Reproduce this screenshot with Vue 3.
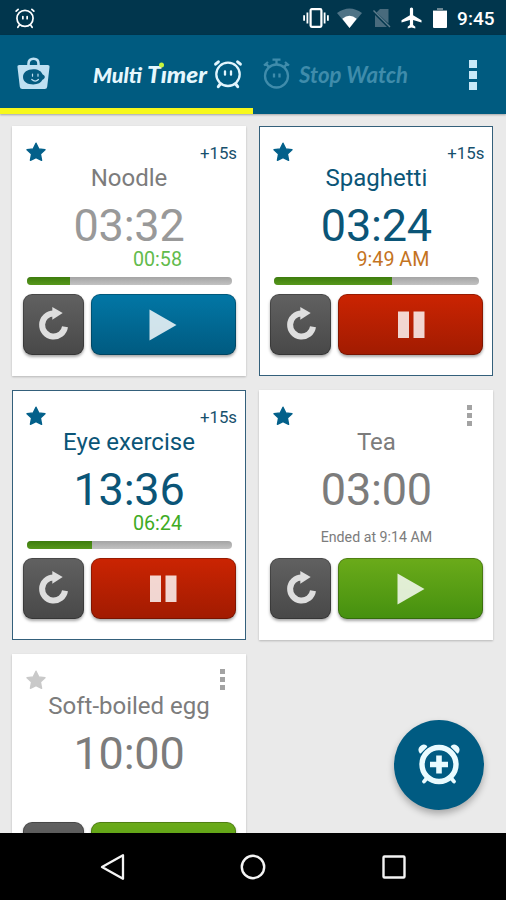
<script setup>
const timers = [
  { name: 'Noodle', time: '03:32', tone: 'paused', extra: '+15s', sub: '00:58', subTone: 'green', progress: 21, action: 'play', color: 'blue', star: true },
  { name: 'Spaghetti', time: '03:24', tone: 'running', extra: '+15s', sub: '9:49 AM', subTone: 'orange', progress: 57.5, action: 'pause', color: 'red', star: true },
  { name: 'Eye exercise', time: '13:36', tone: 'running', extra: '+15s', sub: '06:24', subTone: 'vivid', progress: 32, action: 'pause', color: 'red', star: true },
  { name: 'Tea', time: '03:00', tone: 'idle', note: 'Ended at 9:14 AM', action: 'play', color: 'green', star: true },
  { name: 'Soft-boiled egg', time: '10:00', tone: 'idle', action: 'play', color: 'green', star: false }
]
</script>

<template>
  <div class="screen">
    <div class="status">
      <svg class="s-clock" width="20" height="20" viewBox="0 0 28 28" fill="none" stroke="#fff" stroke-width="2.4" stroke-linecap="round">
        <circle cx="14" cy="14.5" r="11.3" />
        <path d="M11 12v3M17 12v3" />
        <path d="M1.6 4.4 4.4 1.8M26.4 4.4 23.6 1.8M6 24l-2 3M22 24l2 3" />
      </svg>
      <div class="s-right">
        <svg width="26" height="20" viewBox="0 0 26 20">
          <rect x="7.6" y="1.2" width="10.8" height="17.6" rx="1.2" fill="none" stroke="#fff" stroke-width="2.2" />
          <path d="M4.4 4.5v11M1.1 7.2v5.6M21.6 4.5v11M24.9 7.2v5.6" stroke="#fff" stroke-width="1.8" />
        </svg>
        <svg class="wifi" width="25" height="20" viewBox="0 0 25 20">
          <path d="M0 5Q12.5-4 25 5L12.5 20z" fill="#4f7386" />
          <path d="M5.3 10.7Q12.5 5 19.7 10.7L12.5 20z" fill="#fff" />
        </svg>
        <svg width="18" height="20" viewBox="0 0 18 20">
          <path d="M7 1H15.500v14.500L3.500 4.500zM2 7 14 19H2z" fill="#496b7d" />
          <path d="M.5 2.500 17 19" stroke="#5e7c8c" stroke-width="1.500" />
        </svg>
        <svg width="21" height="22" viewBox="0 0 21 22">
          <path d="M10.500.5c1 0 1.600.8 1.600 1.800v5.900l8.400 5.100v2.200l-8.400-2.600v5.200l2.200 1.700v1.700l-3.800-1.100-3.800 1.100v-1.700l2.200-1.700v-5.200L.5 15.500v-2.200l8.400-5.100V2.300C8.900 1.300 9.500.5 10.500.5z" fill="#fff" />
        </svg>
        <svg width="14" height="20" viewBox="0 0 14 20">
          <path d="M4 0h6v2h4v2H0V2h4z" fill="#6c8793" />
          <path d="M0 3h14V19a1 1 0 0 1-1 1H1a1 1 0 0 1-1-1z" fill="#fff" />
        </svg>
        <span class="clock">9:45</span>
      </div>
    </div>

    <header class="bar">
      <div class="tabs">
        <svg class="bag" width="33" height="33" viewBox="0 0 33 33">
          <path d="M11.500 9V6.800C11.500 3.500 13.500 1.800 16.500 1.800S21.500 3.500 21.500 6.800V9" fill="none" stroke="#bfe0f2" stroke-width="2.600" />
          <path d="M2.500 8h28a2 2 0 0 1 2 2.300l-2.300 19.500a2.500 2.500 0 0 1-2.500 2.200H5.300a2.500 2.500 0 0 1-2.500-2.200L.5 10.300A2 2 0 0 1 2.500 8z" fill="#bfe0f2" />
          <path d="M6 20c0-5 4.500-7.800 10.300-7.800 5 0 8 2 9.200 5 1.500.8 2.300 1.800 2.300 2.800s-.8 2-2.300 2.800c-1.500 3-4.500 4.600-9.200 4.600C10.500 27.400 6 25 6 20z" fill="#045b80" />
          <path d="M15.500 17v2.200M21 17v2.200M14.800 22.500q3.500 3.200 6.600 0" fill="none" stroke="#bfe0f2" stroke-width="1.200" stroke-linecap="round" />
        </svg>
        <svg class="logo" width="116" height="32" viewBox="0 0 116 32">
          <defs>
            <linearGradient id="stem" gradientUnits="userSpaceOnUse" x1="0" y1="0" x2="0" y2="32">
              <stop offset=".36" stop-color="#e6f7fd" stop-opacity="0" />
              <stop offset=".36" stop-color="#e6f7fd" />
            </linearGradient>
          </defs>
          <text x="0" y="24" class="brand small" textLength="49" lengthAdjust="spacingAndGlyphs">Multi</text>
          <text x="54" y="24" class="brand" textLength="60" lengthAdjust="spacingAndGlyphs">T<tspan fill="url(#stem)">i</tspan>mer</text>
          <circle cx="68.500" cy="6" r="2.500" fill="#c6f63c" />
        </svg>
        <svg class="alarm" width="28" height="28" viewBox="0 0 28 28" fill="none" stroke="#e2f5fd" stroke-width="2.300" stroke-linecap="round">
          <circle cx="14" cy="14.300" r="11.700" />
          <path d="M11 11.300v3.400M17 11.300v3.400" />
          <path d="M1.600 4.200 4.400 1.800M26.400 4.200 23.600 1.800M6.300 24l-2 2.700M21.700 24l2 2.700" stroke-width="3" />
        </svg>
        <svg class="stopicon" width="28" height="31" viewBox="0 0 28 31" fill="none" stroke="#3f8cab" stroke-width="2.300">
          <circle cx="13.500" cy="18" r="11.500" />
          <path d="M11 15.500v4M16.500 15.500v4" />
          <path d="M13.500 6V1.500M9.500 1.700h8M1 7.500 5 4M3 5.500l3 4M26 7.500 22 4M24 5.500l-3 4" />
        </svg>
        <svg class="stoptext" width="112" height="32" viewBox="0 0 112 32">
          <text x="1" y="23.500" class="brand dim" textLength="109" lengthAdjust="spacingAndGlyphs">Stop Watch</text>
        </svg>
        <div class="more big"><i></i><i></i><i></i></div>
      </div>
      <div class="indicator"></div>
    </header>

    <main class="content">
      <div class="grid">
        <article v-for="t in timers" :key="t.name" class="card" :class="t.tone">
          <div class="head">
            <svg width="20" height="20" viewBox="0 0 20 20">
              <path d="M10 1.200 12.700 6.900 19 7.700 14.400 12 15.600 18.300 10 15.500 4.400 18.300 5.600 12 1 7.700 7.300 6.900z" :class="t.star ? 'fav' : 'nofav'" stroke-width="1.400" stroke-linejoin="round" />
            </svg>
            <span v-if="t.extra" class="extra">{{ t.extra }}</span>
            <div v-else class="more"><i></i><i></i><i></i></div>
          </div>
          <div class="name">{{ t.name }}</div>
          <div class="time">{{ t.time }}</div>
          <div class="info">
            <template v-if="t.sub">
              <div class="sub" :class="t.subTone">{{ t.sub }}</div>
              <div class="track"><div class="fill" :style="{ width: t.progress + '%' }"></div></div>
            </template>
            <div v-else-if="t.note" class="note">{{ t.note }}</div>
          </div>
          <div class="buttons">
            <button class="btn reset">
              <svg width="30" height="33" viewBox="0 0 30 33">
                <path d="M15.600 5.500A11.500 11.500 0 1 0 27 18.700" fill="none" stroke="#dedede" stroke-width="6" />
                <path d="M14.300-1 24.700 4.900 14.300 11.800z" fill="#dedede" />
              </svg>
            </button>
            <button class="btn main" :class="t.color">
              <svg v-if="t.action === 'play'" width="28" height="32" viewBox="0 0 28 32"><path d="M.5.5 27.500 16 .5 31.500z" fill="#fff" fill-opacity=".82" /></svg>
              <svg v-else width="28" height="28" viewBox="0 0 28 28"><path d="M1 .5h11v26.500H1zM16.500.5h11v26.500h-11z" fill="#fff" fill-opacity=".82" /></svg>
            </button>
          </div>
        </article>
      </div>
      <button class="fab">
        <svg width="42" height="42" viewBox="0 0 42 42" fill="none" stroke="#e9fbff">
          <path d="M9 34 6 37.500M33 34 36 37.500" stroke-width="3.800" stroke-linecap="round" />
          <path d="M2.300 8.500A4.300 4.300 0 0 1 8.300 2.500zM39.700 8.500A4.300 4.300 0 0 0 33.700 2.500z" fill="#e9fbff" stroke-width="1.800" stroke-linejoin="round" />
          <circle cx="21" cy="20.500" r="17" stroke-width="5.400" />
          <path d="M21 11.500v18M12 20.500h18" stroke-width="5.600" />
        </svg>
      </button>
    </main>

    <nav class="nav">
      <svg width="26" height="28" viewBox="0 0 26 28"><path d="M23 2.200v23.600L2 14z" fill="none" stroke="#f4f4f4" stroke-width="2.300" stroke-linejoin="round" /></svg>
      <svg width="26" height="28" viewBox="0 0 26 28"><circle cx="13" cy="14" r="11.200" fill="none" stroke="#f4f4f4" stroke-width="2.400" /></svg>
      <svg width="26" height="28" viewBox="0 0 26 28"><rect x="2.500" y="3.500" width="21" height="21" rx="1" fill="none" stroke="#f4f4f4" stroke-width="2.400" /></svg>
    </nav>
  </div>
</template>

<style>
body { margin: 0; background: #000; }
</style>

<style scoped>
.screen { width: 506px; height: 900px; display: flex; flex-direction: column; overflow: hidden; font-family: Roboto, sans-serif; background: #eaeaea; }
svg { display: block; flex: none; overflow: visible; }
.status { height: 35px; flex: none; box-sizing: border-box; padding: 0 11.500px 0 15px; background: #01364d; display: flex; align-items: center; justify-content: space-between; }
.s-right { display: flex; align-items: center; gap: 10.500px; }
.wifi { margin-left: -2px; }
.clock { font-size: 19px; font-weight: 500; color: #fff; line-height: 20px; padding-top: 2px; }
.bar { height: 79px; flex: none; background: #005b80; display: flex; flex-direction: column; position: relative; z-index: 1; box-shadow: 0 1px 2px rgba(0, 0, 0, .3); }
.tabs { flex: 1; display: flex; align-items: center; padding: 6px 0 0 17px; }
.bag { margin-top: -2px; }
.logo { margin-left: 43px; }
.alarm { margin-left: 5px; margin-top: -1px; }
.stopicon { margin: -2px 0 0 21px; }
.stoptext { margin-left: 7px; }
.brand { font-family: Lato, sans-serif; font-weight: 900; font-style: italic; font-size: 23px; fill: #e6f7fd; }
.brand.small { font-size: 21px; }
.brand.dim { font-size: 22px; font-weight: 700; fill: #3f8cab; }
.indicator { width: 253px; height: 6px; background: #f7f81c; }
.more { display: flex; flex-direction: column; gap: 3px; margin-right: 21px; }
.more i { width: 5px; height: 5px; background: #a3a3a3; }
.more.big { gap: 3.500px; margin: 1px 0 0 59px; }
.more.big i { width: 8px; height: 7.500px; background: #c9e8f7; }
.content { flex: 1; min-height: 0; position: relative; overflow: hidden; }
.grid { display: grid; grid-template-columns: 234px 234px; gap: 14px 13.400px; padding: 12px; }
.card { height: 250px; box-sizing: border-box; padding: 11px 10px 0 11px; background: #fff; box-shadow: 0 1px 2px rgba(0, 0, 0, .22); display: flex; flex-direction: column; color: #7c7c7c; }
.card.running { color: #0b5577; padding: 10px 9px 0 10px; border: 1px solid #34607b; box-shadow: none; }
.head { height: 30px; flex: none; display: flex; align-items: center; justify-content: space-between; padding-left: 3px; }
.card .head .more { margin: -1px 11px 0 0; }
.fav { fill: #03608a; stroke: #03608a; }
.nofav { fill: #c9c9c9; stroke: #c9c9c9; }
.extra { font-size: 16.800px; line-height: 20px; padding-top: 1px; margin-right: -1px; color: #17506d; }
.name { font-size: 24px; line-height: 22px; text-align: center; white-space: nowrap; padding-right: 1px; }
.time { margin-top: 14px; font-size: 45px; line-height: 46px; text-align: center; padding-right: 1px; letter-spacing: -.2px; }
.paused .time { color: #999; }
.info { height: 45px; flex: none; display: flex; flex-direction: column; }
.sub { margin-top: 1px; font-size: 19.700px; line-height: 19px; text-align: right; padding-right: 54px; }
.green { color: #62bb4c; }
.vivid { color: #3eab24; }
.orange { color: #c4731e; }
.track { margin: 8px 4px 0 3.500px; height: 8px; border-radius: 4px; overflow: hidden; background: linear-gradient(#a4a4a4, #c2c2c2); }
.fill { height: 8px; background: linear-gradient(#3d7c0d, #57981c); }
.note { margin-top: 15px; font-size: 14.200px; line-height: 18px; text-align: center; padding-right: 1px; }
.buttons { display: flex; gap: 7px; height: 60px; }
.btn { flex: none; box-sizing: border-box; border: 1px solid rgba(0, 0, 0, .25); border-radius: 9px; padding: 0; margin: 0; height: 61px; display: flex; align-items: center; justify-content: center; box-shadow: 0 2px 3px rgba(0, 0, 0, .35); background-origin: border-box; }
.reset { width: 60.500px; background-image: linear-gradient(#616161, #484848); }
.main { width: 145.500px; }
.blue { background-image: linear-gradient(#0277a6, #005a80); }
.red { background-image: linear-gradient(#cb2402, #a11b01); }
.green.main { background-image: linear-gradient(#6bab1a, #45900f); }
.fab { position: absolute; right: 22.500px; bottom: 23px; width: 90px; height: 90px; border: 0; padding: 0; border-radius: 50%; background: #005b82; display: flex; align-items: center; justify-content: center; box-shadow: 0 4px 7px rgba(0, 0, 0, .28); }
.nav { height: 67px; flex: none; background: #000; display: flex; align-items: center; justify-content: center; gap: 114.500px; }
</style>
